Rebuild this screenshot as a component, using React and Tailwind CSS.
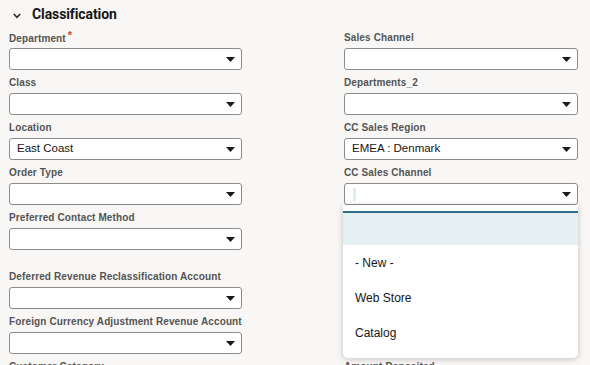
import React from 'react'

const Caret = () => (
  <svg width="9" height="5" viewBox="0 0 9 5" className="shrink-0">
    <path d="M0 0 H9 L4.5 5 Z" fill="#1a1a1a" />
  </svg>
)

const Field = ({ label, value, required, extra = '', children }) => (
  <div className={`pt-[7px] ${extra}`}>
    <div className="h-[12px] leading-[12px] text-[10px] font-bold text-[#545454] tracking-[0.12px] whitespace-nowrap font-['Liberation_Sans',Arial,sans-serif]">
      {label}
      {required && <span className="text-[#c2521f] text-[11px] relative -top-[3px] ml-[2px]">*</span>}
    </div>
    <div className="relative mt-[4px]">
      <div className="h-[22px] bg-white border border-[#8c8c8c] rounded-[3px] flex items-center justify-between pl-[7px] pr-[6px]">
        <span className="text-[11.5px] text-[#161616] font-['Liberation_Sans',Arial,sans-serif]">{value}</span>
        <Caret />
      </div>
      {children}
    </div>
  </div>
)

const Option = ({ children }) => (
  <div className="h-[35px] flex items-center pl-[12px] text-[12px] text-[#161616] font-['Liberation_Sans',Arial,sans-serif]">
    {children}
  </div>
)

const App = () => {
  return (
    <div className="w-[590px] h-[365px] overflow-hidden bg-[#f8f7f5] font-['Roboto',sans-serif]">
      <div className="h-[25px] flex items-center pl-[13px] pt-[4px]">
        <svg width="8" height="6" viewBox="0 0 8 6" className="mt-[2px]">
          <path d="M0.8 1 L4 4.4 L7.2 1" fill="none" stroke="#2b2b2b" strokeWidth="1.6" />
        </svg>
        <span className="ml-[11px] text-[14px] font-bold text-[#161616] tracking-[-0.1px]">Classification</span>
      </div>
      <div className="flex">
        <div className="w-[233px] ml-[9px]">
          <Field label="Department" required />
          <Field label="Class" />
          <Field label="Location" value="East Coast" />
          <Field label="Order Type" />
          <Field label="Preferred Contact Method" />
          <Field label="Deferred Revenue Reclassification Account" extra="mt-[14px]" />
          <Field label="Foreign Currency Adjustment Revenue Account" />
          <Field label="Customer Category" />
        </div>
        <div className="w-[234px] ml-[102px]">
          <Field label="Sales Channel" />
          <Field label="Departments_2" />
          <Field label="CC Sales Region" value="EMEA : Denmark" />
          <Field label="CC Sales Channel" value={<span className="block w-[3px] h-[13px] bg-[#dcecf1] ml-[1px]" />}>
            <div className="absolute left-[-1px] right-0 top-[22px] z-10 bg-white rounded-b-[5px] shadow-[0_1px_6px_rgba(0,0,0,0.22)] pt-[6px] pb-[8px]">
              <div className="h-[34px] bg-[#e5f0f2] border-t-2 border-[#2d6f89]" />
              <Option>- New -</Option>
              <Option>Web Store</Option>
              <Option>Catalog</Option>
            </div>
          </Field>
          <Field label="Amount Deposited" extra="mt-[149px]" />
        </div>
      </div>
    </div>
  )
}

export default App
